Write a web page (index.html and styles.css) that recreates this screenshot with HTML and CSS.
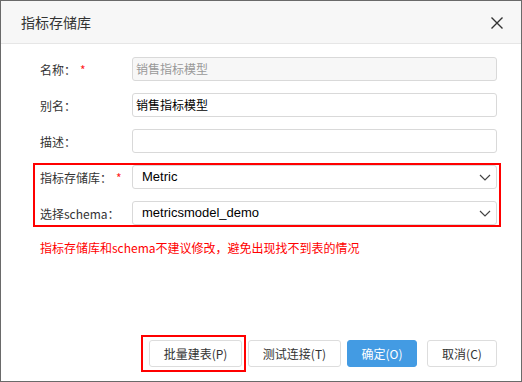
FILE: index.html
```html
<!DOCTYPE html>
<html>
<head>
<meta charset="utf-8" />
<title>指标存储库</title>
<link rel="stylesheet" href="styles.css">
</head>
<body>
<div class="dialog">
    <div class="dlg-head">
        <span class="dlg-title">指标存储库</span>
        <span class="dlg-close">
            <svg width="14" height="14" viewBox="0 0 14 14"><path d="M1.5 1.5L12.5 12.5M12.5 1.5L1.5 12.5" stroke="#333" stroke-width="1.4" fill="none"/></svg>
        </span>
    </div>
    <div class="dlg-body">
        <div class="row">
            <label class="lbl">名称：<i class="req">*</i></label>
            <div class="ipt disabled">销售指标模型</div>
        </div>
        <div class="row">
            <label class="lbl">别名：</label>
            <div class="ipt">销售指标模型</div>
        </div>
        <div class="row">
            <label class="lbl">描述：</label>
            <div class="ipt"></div>
        </div>
        <div class="group mark">
            <div class="row">
                <label class="lbl">指标存储库：<i class="req">*</i></label>
                <div class="ipt sel"><span class="val">Metric</span>
                    <svg width="12" height="7" viewBox="0 0 12 7"><path d="M1 1L6 6L11 1" stroke="#444" stroke-width="1.2" fill="none"/></svg>
                </div>
            </div>
            <div class="row">
                <label class="lbl">选择schema：</label>
                <div class="ipt sel"><span class="val">metricsmodel_demo</span>
                    <svg width="12" height="7" viewBox="0 0 12 7"><path d="M1 1L6 6L11 1" stroke="#444" stroke-width="1.2" fill="none"/></svg>
                </div>
            </div>
        </div>
        <p class="warn">指标存储库和schema不建议修改，避免出现找不到表的情况</p>
    </div>
    <div class="dlg-foot">
        <span class="btn-wrap mark"><button class="btn wide">批量建表(P)</button></span>
        <button class="btn wide">测试连接(T)</button>
        <button class="btn primary">确定(O)</button>
        <button class="btn">取消(C)</button>
    </div>
</div>
</body>
</html>
```

FILE: styles.css
```css
*{ margin:0; padding:0; box-sizing:border-box;}
body{ background:#6a6a6a; padding:1px 0 0 1px; font-family:"Noto Sans CJK SC","Liberation Sans",sans-serif; font-size:12px; color:#333;}
.dialog{ width:520px; height:380px; background:#fff; display:flex; flex-direction:column;}
.dlg-head{ height:43px; background:#f7f7f7; border-bottom:1px solid #e6e6e6; display:flex; align-items:center; justify-content:space-between; padding:0 17px 0 20px;}
.dlg-title{ font-size:14px; color:#333;}
.dlg-close{ display:flex; padding-top:2px;}
.dlg-body{ flex:1; padding:13px 24px 0 39px; display:flex; flex-direction:column; gap:12px;}
.group{ display:flex; flex-direction:column; gap:12px;}
.row{ display:flex; align-items:center; height:24px;}
.lbl{ width:92px; color:#333; white-space:nowrap;}
.req{ font-style:normal; color:#f22; margin-left:4px;}
.ipt{ flex:1; height:24px; border:1px solid #d9d9d9; border-radius:3px; padding:0 3px; display:flex; align-items:center; color:#000; line-height:22px;}
.ipt.disabled{ background:#f7f7f7; color:#999;}
.sel{ justify-content:space-between; padding:0 5px 0 9px;}
.sel .val{ font-family:"Liberation Sans","Noto Sans CJK SC",sans-serif; font-size:13px;}
.mark{ position:relative;}
.mark::after{ content:""; position:absolute; border:2px solid #f00; pointer-events:none;}
.group.mark::after{ top:-2px; left:-7px; right:-4px; bottom:-2px;}
.warn{ color:#f00; margin-top:2px; line-height:18px;}
.dlg-foot{ display:flex; justify-content:flex-end; align-items:center; gap:6px; padding:0 24px 14px 0;}
.btn{ height:27px; min-width:70px; padding:0 12px; border:1px solid #ddd; border-radius:3px; background:#fff; color:#333; font-family:"Noto Sans CJK SC","Liberation Sans",sans-serif; font-size:12px;}
.btn.wide{ width:93px;}
.btn.primary{ background:#439be3; border-color:#439be3; color:#fff; margin-right:4px;}
.btn-wrap{ display:flex;}
.btn-wrap.mark::after{ top:-5px; left:-8px; right:-4px; bottom:-5px;}
```
